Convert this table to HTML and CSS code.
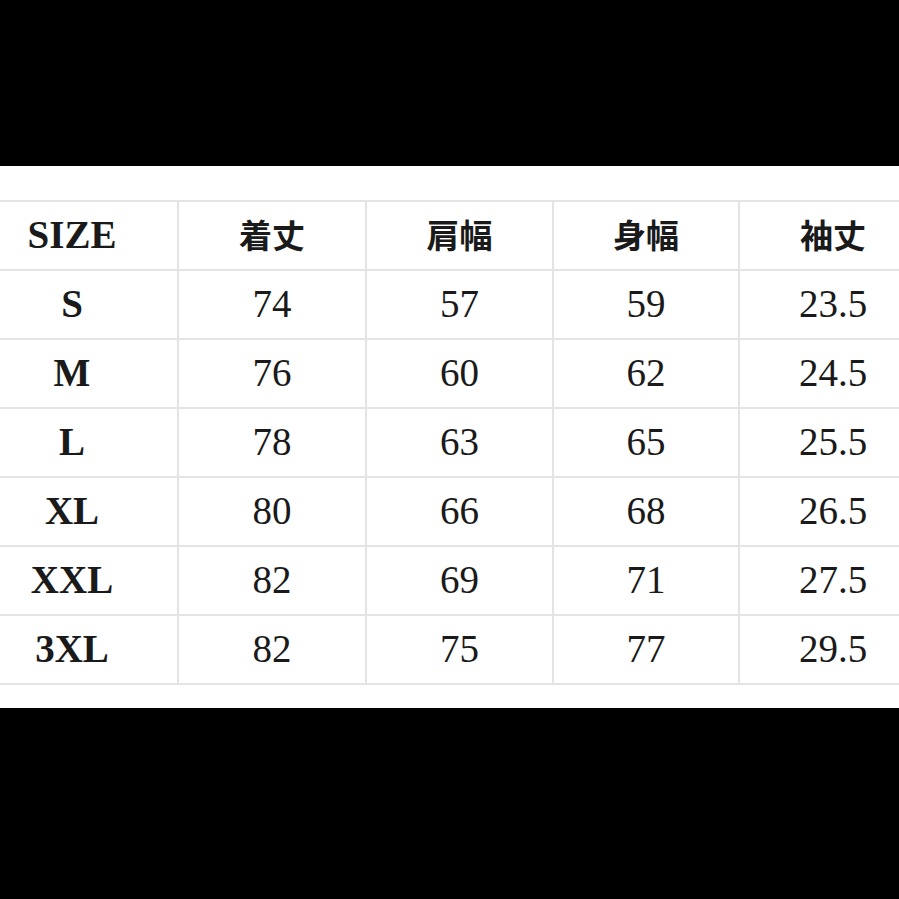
FILE: index.html
```html
<!DOCTYPE html>
<html lang="ja">
<head>
<meta charset="utf-8">
<title>Size chart</title>
<link rel="stylesheet" href="styles.css">
</head>
<body>
<div class="band">
  <div class="chart">
    <div class="cell first label">SIZE</div>
    <div class="cell cjk">着丈</div>
    <div class="cell cjk">肩幅</div>
    <div class="cell cjk">身幅</div>
    <div class="cell last cjk">袖丈</div>

    <div class="cell first label">S</div>
    <div class="cell">74</div>
    <div class="cell">57</div>
    <div class="cell">59</div>
    <div class="cell last">23.5</div>

    <div class="cell first label">M</div>
    <div class="cell">76</div>
    <div class="cell">60</div>
    <div class="cell">62</div>
    <div class="cell last">24.5</div>

    <div class="cell first label">L</div>
    <div class="cell">78</div>
    <div class="cell">63</div>
    <div class="cell">65</div>
    <div class="cell last">25.5</div>

    <div class="cell first label">XL</div>
    <div class="cell">80</div>
    <div class="cell">66</div>
    <div class="cell">68</div>
    <div class="cell last">26.5</div>

    <div class="cell first label">XXL</div>
    <div class="cell">82</div>
    <div class="cell">69</div>
    <div class="cell">71</div>
    <div class="cell last">27.5</div>

    <div class="cell first label">3XL</div>
    <div class="cell">82</div>
    <div class="cell">75</div>
    <div class="cell">77</div>
    <div class="cell last">29.5</div>
  </div>
</div>
</body>
</html>
```
FILE: styles.css
```css
html, body {
  margin: 0;
  padding: 0;
  background: #000;
  height: 100%;
  overflow: hidden;
}
body {
  padding-top: 166px;
  box-sizing: border-box;
}
.band {
  background: #fff;
  height: 542px;
  padding-top: 34px;
  box-sizing: border-box;
}
.chart {
  display: grid;
  grid-template-columns: 177px 186px 185px 184px 1fr;
  grid-auto-rows: 67px;
  gap: 2px;
  padding: 2px 0;
  background: #e4e4e4;
}
.cell {
  background: #fff;
  display: flex;
  align-items: center;
  justify-content: center;
  font-family: "Liberation Serif", "Times New Roman", serif;
  font-size: 39px;
  color: #1a1a1a;
  padding-bottom: 2px;
  box-sizing: border-box;
}
.first {
  padding-right: 33px;
}
.last {
  padding-left: 27px;
}
.label {
  font-weight: 700;
}
.cjk {
  font-family: "Noto Sans CJK JP", "Noto Sans CJK SC", sans-serif;
  font-size: 33px;
  font-weight: 700;
  padding-bottom: 3px;
}
```
